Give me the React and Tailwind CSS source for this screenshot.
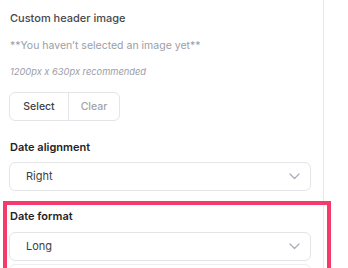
import React from "react";

function Chevron() {
  return (
    <svg width="11" height="7" viewBox="0 0 11 7" fill="none" className="shrink-0">
      <path d="M1 1l4.5 4.5L10 1" stroke="#a7abb2" strokeWidth="1.2" strokeLinecap="round" strokeLinejoin="round" />
    </svg>
  );
}

function SelectBox({ value }) {
  return (
    <div className="h-[29px] w-[302px] rounded-[6px] border border-[#e3e5e8] bg-white flex items-center justify-between pl-[16px] pr-[10px] text-[11px] text-[#3c3f44]">
      <span>{value}</span>
      <Chevron />
    </div>
  );
}

export default function App() {
  return (
    <div className="relative w-[348px] h-[268px] overflow-hidden bg-white" style={{ fontFamily: "Inter, 'Noto Sans', sans-serif" }}>
      <div className="w-[324px] h-full border-r border-[#e8e9eb] pl-[9px] pt-[10px]">
        <div className="pl-[1px] text-[11px] leading-[16px] text-[#45484d] font-medium">Custom header image</div>
        <div className="mt-[12px] pl-[1px] text-[10.5px] leading-[16px] text-[#9a9ea5]">**You haven’t selected an image yet**</div>
        <div className="mt-[12px] pl-[1px] text-[9.3px] leading-[12px] italic text-[#9a9ea5]">1200px x 630px recommended</div>
        <div className="mt-[14px] flex h-[29px] w-[111px] rounded-[6px] border border-[#e3e5e8] text-[10.5px] font-medium">
          <div className="w-[59px] flex items-center justify-center border-r border-[#e3e5e8] text-[#3c3f44]">Select</div>
          <div className="flex-1 flex items-center justify-center text-[#a0a4aa]">Clear</div>
        </div>
        <div className="mt-[18px] pl-[1px] text-[11px] leading-[16px] font-semibold text-[#1f2226]">Date alignment</div>
        <div className="mt-[7px]"><SelectBox value="Right" /></div>
        <div className="mt-[17px] pl-[1px] text-[11px] leading-[16px] font-semibold text-[#1f2226]">Date format</div>
        <div className="mt-[8px]"><SelectBox value="Long" /></div>
        <div className="mt-[3px] h-[20px] w-[302px] rounded-t-[6px] border border-[#eeeff1]" />
      </div>
      <div className="absolute left-[3px] top-[201px] w-[328px] h-[90px] border-[4px] border-[#f53a6c]" />
    </div>
  );
}
